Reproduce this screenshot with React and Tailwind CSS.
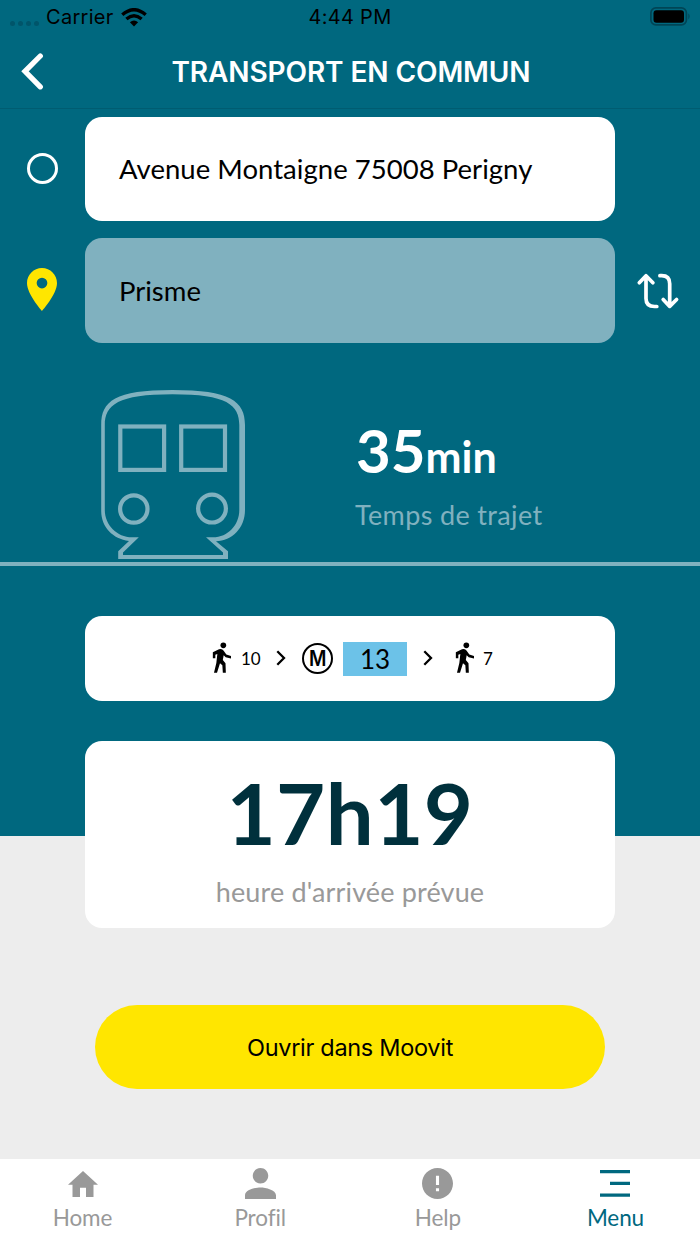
import React from "react";

function StatusBar() {
  return (
    <div className="grid h-[34px] grid-cols-[200px_300px_200px] items-center font-[Inter,sans-serif] text-[20px] tracking-[0.3px] text-black">
      <div className="flex h-full items-center pl-[10px]">
        <div className="mt-[12px] mr-[7px] flex gap-[3px]">
          {[0, 1, 2, 3].map((i) => (
            <span key={i} className="h-[5px] w-[5px] rounded-full bg-[#00556a]" />
          ))}
        </div>
        <span>Carrier</span>
        <svg className="ml-[7px] h-[19px] w-[26px]" viewBox="0 0 26 19">
          <g fill="none" stroke="#000" strokeWidth="3.4">
            <path d="M1.3 6.8Q13-3.4 24.7 6.8" />
            <path d="M5.4 11Q13 4.6 20.6 11" />
          </g>
          <path d="M8.9 14.3Q13 10.8 17.1 14.3L13 18.4z" fill="#000" />
        </svg>
      </div>
      <div className="text-center">4:44 PM</div>
      <div className="flex items-center justify-end pr-[9px]">
        <svg className="-mt-[2px] h-[19px] w-[41px]" viewBox="0 0 41 19">
          <rect x="0.9" y="0.9" width="35.5" height="17" rx="5" fill="none" stroke="#004556" strokeWidth="1.7" />
          <rect x="3.5" y="3.2" width="30.5" height="12.6" rx="3" fill="#000" />
          <path d="M38.4 6.3q2.4 3.1 0 6.2z" fill="#004556" />
        </svg>
      </div>
    </div>
  );
}

function Train() {
  return (
    <svg className="h-[171px] w-[146px]" viewBox="100 389 146 171">
      <g fill="#80b1bf" fillRule="evenodd">
        <path d="M101.2 425C101.2 401 115 390 172.500 390S245 401 245 425V510C245 528 232 541 216 541.300L228 551.300V559H118.200V551.300L129 541C113 539 101.200 527 101.200 511ZM104.800 425V510C104.800 525 117 537.300 132 537.300H138.800L123 552.500V554.900H223V552.500L206 537.300H213C228 537.300 239.300 525 239.300 510V425C239.300 405 227 394.300 172.500 394.300S104.800 405 104.800 425Z" />
      </g>
      <g fill="none" stroke="#80b1bf" strokeWidth="4.2">
        <rect x="120.3" y="426.5" width="43.8" height="43.4" />
        <rect x="181.2" y="426.5" width="43.8" height="43.4" />
        <circle cx="133.8" cy="509" r="13.7" />
        <circle cx="212" cy="508.600" r="13.900" />
      </g>
    </svg>
  );
}

function Walk() {
  return (
    <svg className="h-[31px] w-[20px] shrink-0" viewBox="36 95 60 93">
      <circle cx="70" cy="105" r="8.500" />
      <path d="M38.500 126L57 117Q66 114 71 121L79 132.500L93 137V144.500L77 140.500L71 134.500L68.500 149L76.500 159L77.500 187H68.500L67 165L60 158.500L51 187H42L49 158L52 131L46 133.500V143.500H38.500Z" />
    </svg>
  );
}

function Chevron() {
  return (
    <svg className="-mt-[2px] h-[16px] w-[10px] shrink-0" viewBox="0 0 10 16">
      <path d="M1.300 1.300L8 8l-6.700 6.700" fill="none" stroke="#000" strokeWidth="2.3" />
    </svg>
  );
}

function Tab({ label, color, children }) {
  return (
    <div className={"flex w-[177.67px] shrink-0 flex-col items-center " + color}>
      <div className="mt-[8px] flex h-[33px] items-center justify-center">{children}</div>
      <div className="mt-[3px] text-[22.5px] leading-[30px] tracking-[-0.1px]">{label}</div>
    </div>
  );
}

export default function App() {
  return (
    <div className="flex h-[1244px] w-[700px] flex-col overflow-hidden bg-[#ededed] font-[Lato,sans-serif] whitespace-nowrap">
      <div className="h-[836px] shrink-0 bg-[#00687f]">
        <StatusBar />
        <div className="flex h-[75px] items-center border-b border-[#005c71] pl-[20px]">
          <svg className="h-[40px] w-[26px]" viewBox="20 51 26 40">
            <path d="M40.300 56L25 71.300l15.300 15.500" fill="none" stroke="#fff" strokeWidth="5.3" strokeLinecap="round" />
          </svg>
          <h1 className="mt-[2px] w-[610px] text-center font-[Inter,sans-serif] text-[28px] leading-[34px] font-semibold tracking-[-0.1px] text-white">
            TRANSPORT EN COMMUN
          </h1>
        </div>

        <div className="mt-[8px] flex items-center">
          <div className="flex w-[85px] justify-center">
            <div className="-mt-[1px] h-[31px] w-[31px] rounded-full border-[3px] border-white" />
          </div>
          <div className="flex h-[104px] w-[530px] items-center rounded-[17px] bg-white pl-[34px] text-[27.5px] tracking-[0.03px] text-black">
            Avenue Montaigne 75008 Perigny
          </div>
        </div>
        <div className="mt-[17px] flex items-center">
          <div className="flex w-[85px] justify-center">
            <svg className="-mt-[3px] mr-[1px] h-[43px] w-[30px]" viewBox="5 2 14 20" preserveAspectRatio="none">
              <path fill="#ffe600" d="M12 2C8.130 2 5 5.130 5 9c0 5.250 7 13 7 13s7-7.750 7-13c0-3.870-3.130-7-7-7zm0 9.500a2.500 2.500 0 010-5 2.500 2.500 0 010 5z" />
            </svg>
          </div>
          <div className="flex h-[105px] w-[530px] items-center rounded-[17px] bg-[#80b1bf] pl-[34px] text-[27.5px] text-black">
            Prisme
          </div>
          <svg className="ml-[21px] h-[38px] w-[44px]" viewBox="636 272 44 38">
            <g fill="none" stroke="#fff" strokeWidth="3.7" strokeLinecap="round" strokeLinejoin="round">
              <path d="M639.300 282.700l6.700-6.900 6.900 6.900M646 276.500v22q0 8 8.500 8h2.300" />
              <path d="M663.200 299.500l6.500 6.900 6.900-6.900M669.700 306v-22.300q0-8-8-8h-1.800" />
            </g>
          </svg>
        </div>

        <div className="mt-[46px] flex h-[173px] pl-[100px]">
          <Train />
          <div className="pl-[110px] text-white">
            <div className="mt-[26px] flex h-[70px] items-baseline font-bold leading-[70px]">
              <span className="text-[60px]">35</span>
              <span className="text-[43px]">min</span>
            </div>
            <div className="mt-[12px] -ml-[1px] text-[27px] leading-[36px] tracking-[0.35px] text-[#80b1bf]">Temps de trajet</div>
          </div>
        </div>
        <div className="h-[4px] bg-[#80b1bf]" />

        <div className="mx-[85px] mt-[50px] flex h-[85px] items-center rounded-[17px] bg-white pl-[127px] text-black">
          <div className="-mt-[3px] flex"><Walk /></div>
          <span className="ml-[9px] w-[20px] text-[17px]">10</span>
          <div className="ml-[15px] flex"><Chevron /></div>
          <div className="-mt-[1px] ml-[16px] flex h-[31px] w-[31px] items-center justify-center rounded-full border-2 border-black font-[Inter,sans-serif] text-[21px] leading-none font-semibold">
            <span className="scale-x-90">M</span>
          </div>
          <div className="ml-[10px] flex h-[34px] w-[64px] items-center justify-center bg-[#6cc2e8] text-[26px] leading-none">13</div>
          <div className="ml-[16px] flex"><Chevron /></div>
          <div className="-mt-[3px] ml-[22px] flex"><Walk /></div>
          <span className="ml-[8px] text-[17px]">7</span>
        </div>
      </div>

      <div className="flex h-[323px] shrink-0 flex-col items-center">
        <div className="-mt-[95px] h-[187px] w-[530px] shrink-0 rounded-[17px] bg-white text-center">
          <div className="mt-[21px] h-[100px] text-[85px] leading-[100px] font-bold tracking-[0.4px] text-[#00303c]">17h19</div>
          <div className="mt-[12px] text-[27px] leading-[36px] tracking-[0.15px] text-[#999]">heure d'arrivée prévue</div>
        </div>
        <button className="mt-[77px] h-[84px] w-[510px] shrink-0 rounded-full bg-[#ffe600] pt-[2px] text-center font-[Inter,sans-serif] text-[23.5px] tracking-[-0.3px] text-black">
          Ouvrir dans Moovit
        </button>
      </div>

      <nav className="flex h-[85px] shrink-0 justify-center bg-white pr-[2px]">
        <Tab label="Home" color="text-[#999]">
          <svg className="mt-[1px] h-[26px] w-[30px]" viewBox="2 3 20 17" preserveAspectRatio="none">
            <path fill="currentColor" d="M10 20v-6h4v6h5v-8h3L12 3 2 12h3v8z" />
          </svg>
        </Tab>
        <Tab label="Profil" color="text-[#999]">
          <svg className="h-[31px] w-[31px]" viewBox="4 4 16 16">
            <path fill="currentColor" d="M12 12c2.210 0 4-1.790 4-4s-1.790-4-4-4-4 1.790-4 4 1.790 4 4 4zm0 2c-2.670 0-8 1.340-8 4v2h16v-2c0-2.660-5.330-4-8-4z" />
          </svg>
        </Tab>
        <Tab label="Help" color="text-[#999]">
          <svg className="h-[31px] w-[31px]" viewBox="2 2 20 20">
            <path fill="currentColor" d="M12 2C6.480 2 2 6.480 2 12s4.480 10 10 10 10-4.480 10-10S17.520 2 12 2zm1 15h-2v-2h2v2zm0-4h-2V7h2v6z" />
          </svg>
        </Tab>
        <Tab label="Menu" color="text-[#00687f]">
          <svg className="h-[27px] w-[30px]" viewBox="0 0 30 27">
            <path fill="currentColor" d="M0 0h30v3.300H0zM10 11.800h20v3.300H10zM0 23.500h30v3.300H0z" />
          </svg>
        </Tab>
      </nav>
    </div>
  );
}
